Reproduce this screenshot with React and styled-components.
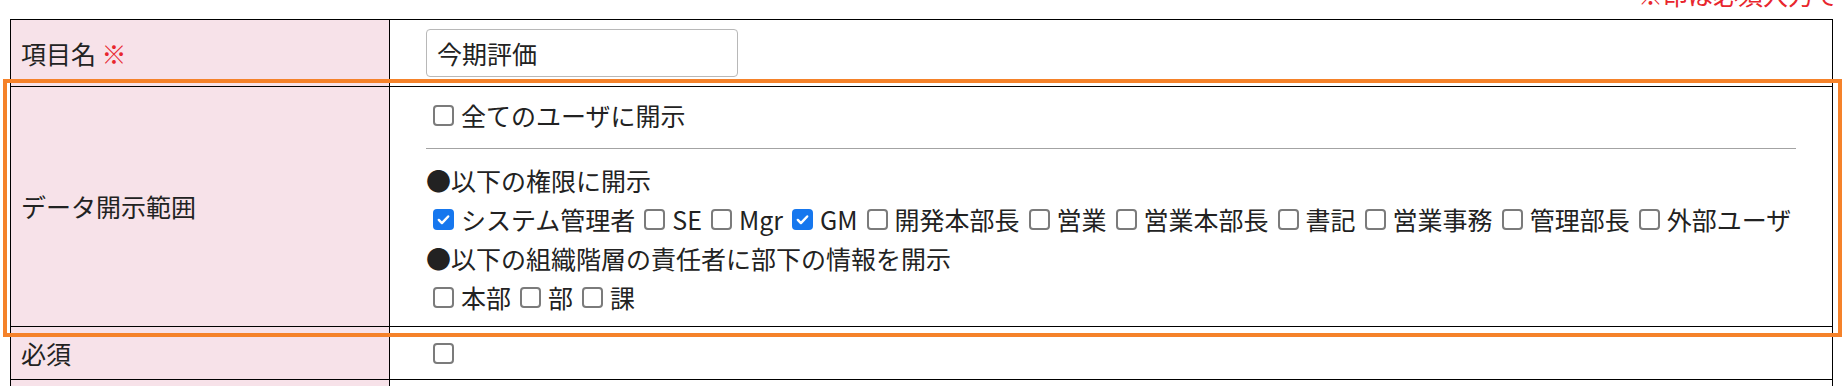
import styled, { createGlobalStyle } from "styled-components";

const GlobalStyle = createGlobalStyle`
  body {
    margin: 0;
    background: #fff;
    color: #222;
    font-family: "Noto Sans CJK JP", "Noto Sans", sans-serif;
  }
`;

const Page = styled.div`
  position: relative;
  display: flex;
  flex-direction: column;
  padding: 0 14px 0 10px;
`;

const Note = styled.div`
  align-self: flex-end;
  width: 200px;
  margin: -25px -5px 5px 0;
  overflow: hidden;
  white-space: nowrap;
  font-size: 25px;
  line-height: 39px;
  color: #e8262d;
`;

const Table = styled.table`
  width: 100%;
  table-layout: fixed;
  border-collapse: collapse;
  font-size: 25px;
  line-height: 39px;
`;

const Th = styled.th`
  width: 358px;
  padding: 0 10px;
  border: 1px solid #000;
  background: #f7e2e9;
  text-align: left;
  font-weight: 400;
  vertical-align: middle;
  height: ${(p) => p.$height || "auto"};
`;

const Td = styled.td`
  padding: ${(p) => p.$pad || "9px 36px"};
  border: 1px solid #000;
  vertical-align: middle;
`;

const Required = styled.span`
  color: #e8262d;
`;

const TextInput = styled.input`
  display: block;
  box-sizing: border-box;
  width: 312px;
  height: 48px;
  padding: 0 10px;
  border: 1px solid #b8b8b8;
  border-radius: 4px;
  font: inherit;
  font-size: 25px;
  color: #222;
  background: #fff;
`;

const Line = styled.div`
  display: flex;
  align-items: center;
  gap: 2px;
  white-space: nowrap;
  line-height: ${(p) => p.$lh || "39px"};
  min-height: ${(p) => p.$lh || "39px"};
`;

const Rule = styled.hr`
  margin: 13px 0 12px;
  border: 0;
  border-top: 1px solid #a3a3a3;
`;

const Item = styled.label`
  display: inline-flex;
  align-items: center;
`;

const Box = styled.span`
  flex: none;
  box-sizing: border-box;
  width: 21px;
  height: 21px;
  margin: 0 7px;
  border-radius: 4px;
  border: ${(p) => (p.$checked ? "none" : "2px solid #7b7b7b")};
  background: ${(p) => (p.$checked ? "#1677ee" : "#fff")};
  display: inline-flex;
  align-items: center;
  justify-content: center;
`;

const Highlight = styled.div`
  position: absolute;
  left: 3px;
  top: 79px;
  width: 1839px;
  height: 258px;
  box-sizing: border-box;
  border: 4px solid #f5822a;
  pointer-events: none;
`;

const Check = ({ checked, children }) => (
  <Item>
    <Box $checked={checked}>
      {checked && (
        <svg width="15" height="15" viewBox="0 0 16 16">
          <path
            d="M3 8.5l3.3 3.3L13 4.8"
            fill="none"
            stroke="#fff"
            strokeWidth="2.6"
            strokeLinecap="round"
            strokeLinejoin="round"
          />
        </svg>
      )}
    </Box>
    {children}
  </Item>
);

const roles = [
  { name: "システム管理者", checked: true },
  { name: "SE" },
  { name: "Mgr" },
  { name: "GM", checked: true },
  { name: "開発本部長" },
  { name: "営業" },
  { name: "営業本部長" },
  { name: "書記" },
  { name: "営業事務" },
  { name: "管理部長" },
  { name: "外部ユーザ" },
];

const orgs = ["本部", "部", "課"];

export default function App() {
  return (
    <>
      <GlobalStyle />
      <Page>
        <Note>※印は必須入力です</Note>
        <Table>
          <tbody>
            <tr>
              <Th>
                項目名 <Required>※</Required>
              </Th>
              <Td>
                <TextInput defaultValue="今期評価" />
              </Td>
            </tr>
            <tr>
              <Th>データ開示範囲</Th>
              <Td>
                <Line>
                  <Check>全てのユーザに開示</Check>
                </Line>
                <Rule />
                <Line>●以下の権限に開示</Line>
                <Line>
                  {roles.map((r) => (
                    <Check key={r.name} checked={r.checked}>
                      {r.name}
                    </Check>
                  ))}
                </Line>
                <Line>●以下の組織階層の責任者に部下の情報を開示</Line>
                <Line>
                  {orgs.map((o) => (
                    <Check key={o}>{o}</Check>
                  ))}
                </Line>
              </Td>
            </tr>
            <tr>
              <Th>必須</Th>
              <Td $pad="8px 36px">
                <Line $lh="36px">
                  <Check />
                </Line>
              </Td>
            </tr>
            <tr>
              <Th $height="50px"></Th>
              <Td />
            </tr>
          </tbody>
        </Table>
        <Highlight />
      </Page>
    </>
  );
}
